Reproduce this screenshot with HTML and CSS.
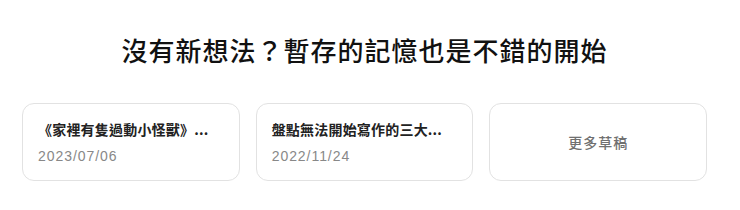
FILE: index.html
```html
<!DOCTYPE html>
<html lang="zh-Hant">
<head>
  <meta charset="UTF-8">
  <title>草稿</title>
  <link rel="stylesheet" href="styles.css">
</head>
<body>
  <section class="drafts">
    <h2 class="drafts-title">沒有新想法？暫存的記憶也是不錯的開始</h2>
    <div class="draft-list">
      <a class="draft-card" href="#">
        <span class="draft-name">《家裡有隻過動小怪獸》...</span>
        <span class="draft-date">2023/07/06</span>
      </a>
      <a class="draft-card" href="#">
        <span class="draft-name">盤點無法開始寫作的三大...</span>
        <span class="draft-date">2022/11/24</span>
      </a>
      <a class="draft-card more" href="#">更多草稿</a>
    </div>
  </section>
</body>
</html>
```

FILE: styles.css
```css
body { margin:0; background:#fff; font-family:"Noto Sans CJK TC", sans-serif; color:#222; }
.drafts { width:685px; padding-left:22px; }
.drafts-title { margin:0; padding-top:32px; font-size:26px; line-height:36px; font-weight:500; letter-spacing:1px; text-align:center; color:#111; }
.draft-list { display:grid; grid-template-columns:repeat(3, 1fr); gap:16px; margin-top:35px; }
.draft-card { display:flex; flex-direction:column; box-sizing:border-box; height:78px; padding:15px 15px 0; border:1px solid #e2e2e2; border-radius:12px; text-decoration:none; color:inherit; }
.draft-name { font-size:14px; line-height:20px; font-weight:700; letter-spacing:0.2px; color:#222; white-space:nowrap; }
.draft-date { margin-top:7px; font-family:"Liberation Sans", sans-serif; font-size:14px; line-height:20px; letter-spacing:0.95px; color:#888; }
.draft-card.more { align-items:center; justify-content:center; padding:0; font-size:14px; font-weight:500; letter-spacing:1px; color:#707070; }
```
